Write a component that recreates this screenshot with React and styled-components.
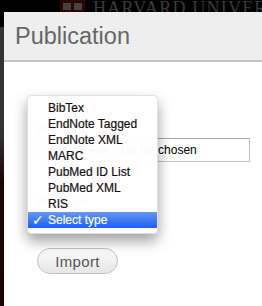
import React from 'react';
import styled, { createGlobalStyle } from 'styled-components';

const types = [
	'BibTex',
	'EndNote Tagged',
	'EndNote XML',
	'MARC',
	'PubMed ID List',
	'PubMed XML',
	'RIS',
	'Select type',
];

export default function App() {
	return (
		<>
			<GlobalStyle />
			<Page>
				<TopBar>
					<Shield width='25' height='12' viewBox='0 0 25 12'>
						<rect x='0' y='0' width='25' height='12' fill='#2a0707' />
						<rect x='3' y='3' width='8' height='7' fill='#4a4040' />
						<rect x='14' y='3' width='8' height='7' fill='#4a4040' />
					</Shield>
					<Wordmark>HARVARD UNIVERS</Wordmark>
				</TopBar>
				<Main>
					<Strip />
					<Dialog>
						<Header>
							<Title>Publication</Title>
						</Header>
						<Body>
							<FieldLabel>Import file</FieldLabel>
							<FileInput>
								<ChooseBtn>Choose File</ChooseBtn>
								<span>No file chosen</span>
							</FileInput>
							<FieldLabel $gap>File Type</FieldLabel>
							<SelectBox>Select type</SelectBox>
							<ImportBtn>Import</ImportBtn>
						</Body>
						<Menu>
							{types.map((t) => (
								<MenuItem key={t} $selected={t === 'Select type'}>
									{t === 'Select type' && <Check>✓</Check>}
									{t}
								</MenuItem>
							))}
						</Menu>
					</Dialog>
				</Main>
			</Page>
		</>
	);
}

const GlobalStyle = createGlobalStyle`
	html, body {
		margin: 0;
		padding: 0;
		background: #000;
		overflow: hidden;
	}
`;

const Page = styled.div`
	width: 262px;
	height: 306px;
	display: flex;
	flex-direction: column;
	background: #000;
	overflow: hidden;
`;

const TopBar = styled.div`
	height: 12px;
	flex: none;
	display: flex;
	align-items: flex-start;
	overflow: hidden;
	padding-left: 60px;
	gap: 8px;
`;

const Shield = styled.svg`
	display: block;
	flex: none;
`;

const Wordmark = styled.div`
	font-family: 'Liberation Serif', serif;
	font-size: 18px;
	line-height: 18px;
	letter-spacing: 1.2px;
	color: #3b3b3b;
	white-space: nowrap;
	margin-top: -1px;
`;

const Main = styled.div`
	flex: 1;
	display: flex;
	min-height: 0;
`;

const Strip = styled.div`
	width: 4px;
	flex: none;
	background: linear-gradient(
		to bottom,
		#000 0,
		#000 15px,
		#333 15px,
		#333 120px,
		#1c0606 170px,
		#1a0404 100%
	);
`;

const Dialog = styled.div`
	position: relative;
	flex: 1;
	background: #fff;
	display: flex;
	flex-direction: column;
`;

const Header = styled.div`
	height: 48px;
	background: #eeeeee;
	border-bottom: 2px solid #c2c2c2;
	padding-left: 11px;
`;

const Title = styled.h1`
	margin: 0;
	font-family: 'Liberation Sans', Arial, sans-serif;
	font-weight: normal;
	font-size: 23.5px;
	line-height: 48px;
	color: #666;
`;

const Body = styled.div`
	padding: 60px 0 0 33px;
	display: flex;
	flex-direction: column;
	align-items: flex-start;
	font-family: 'Liberation Sans', Arial, sans-serif;
`;

const FieldLabel = styled.div`
	font-size: 12px;
	font-weight: bold;
	line-height: 14px;
	color: #777;
	margin-top: ${(p) => (p.$gap ? '33px' : '0')};
	margin-bottom: 2px;
`;

const FileInput = styled.div`
	box-sizing: border-box;
	width: 213px;
	height: 24px;
	border: 1px solid #c4c4c4;
	border-top-color: #a8a8a8;
	display: flex;
	align-items: center;
	gap: 6px;
	padding-left: 4px;
	font-size: 12px;
	color: #000;
`;

const ChooseBtn = styled.span`
	border: 1px solid #aaa;
	border-radius: 3px;
	padding: 1px 6px;
	font-size: 11px;
	background: #eee;
`;

const SelectBox = styled.div`
	height: 16px;
	font-size: 12px;
	line-height: 16px;
	padding: 0 10px;
`;

const ImportBtn = styled.button`
	margin-top: 21px;
	box-sizing: border-box;
	width: 81px;
	height: 26px;
	border-radius: 13px;
	border: 1px solid #c3c3c3;
	background: linear-gradient(to bottom, #fbfbfb, #e6e6e6);
	font-family: 'Liberation Sans', Arial, sans-serif;
	font-size: 15px;
	letter-spacing: 0.3px;
	color: #555;
	padding: 0;
`;

const Menu = styled.ul`
	position: absolute;
	left: 23px;
	top: 83px;
	width: 131px;
	box-sizing: border-box;
	margin: 0;
	padding: 4px 0 5px;
	list-style: none;
	background: rgba(255, 255, 255, 0.97);
	border: 1px solid rgba(0, 0, 0, 0.12);
	border-radius: 5px;
	box-shadow: 0 7px 14px rgba(0, 0, 0, 0.38);
	font-family: 'Liberation Sans', Arial, sans-serif;
	font-size: 12px;
	-webkit-text-stroke: 0.2px currentColor;
`;

const MenuItem = styled.li`
	position: relative;
	height: 16px;
	line-height: 16px;
	padding-left: 20px;
	color: ${(p) => (p.$selected ? '#fff' : '#111')};
	background: ${(p) =>
		p.$selected ? 'linear-gradient(to bottom, #6496f7, #1d5ff0)' : 'transparent'};
`;

const Check = styled.span`
	position: absolute;
	left: 4px;
	top: 0;
	font-family: 'DejaVu Sans', sans-serif;
	font-size: 14px;
	font-weight: bold;
	font-style: italic;
`;
